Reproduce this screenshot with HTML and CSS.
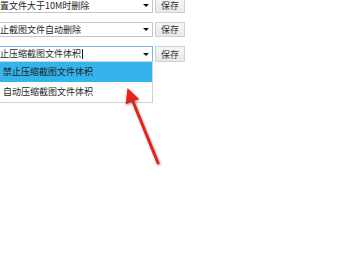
FILE: index.html
```html
<!DOCTYPE html>
<html lang="zh-CN">
<head>
    <meta charset="UTF-8">
    <title>截图设置</title>
    <link rel="stylesheet" href="styles.css">
</head>
<body>
    <div class="settings">
        <div class="row">
            <div class="select">
                <span class="value">置文件大于10M时删除</span>
                <span class="caret"></span>
            </div>
            <button class="save">保存</button>
        </div>
        <div class="row">
            <div class="select">
                <span class="value">止截图文件自动删除</span>
                <span class="caret"></span>
            </div>
            <button class="save">保存</button>
        </div>
        <div class="row">
            <div class="select focused">
                <span class="value">止压缩截图文件体积<i class="cursor"></i></span>
                <span class="caret"></span>
                <ul class="options">
                    <li class="active">禁止压缩截图文件体积</li>
                    <li>自动压缩截图文件体积</li>
                </ul>
            </div>
            <button class="save">保存</button>
        </div>
    </div>

    <svg class="pointer" width="341" height="255" viewBox="0 0 341 255">
        <line x1="158" y1="163" x2="131.5" y2="98" stroke="#e8221b" stroke-width="3" stroke-linecap="round"/>
        <polygon points="127.5,88 125.5,104.5 139,99" fill="#e8221b"/>
    </svg>
</body>
</html>
```

FILE: styles.css
```css
body {
    margin: 0;
    height: 255px;
    background: #fff;
    font-family: "Noto Sans CJK SC", "Noto Sans", sans-serif;
    font-size: 9px;
    color: #1e1e1e;
}
.settings { margin-top: -2px; }
.row {
    display: flex;
    align-items: stretch;
    height: 15px;
    margin-bottom: 9px;
}
.row:nth-child(3) { height: 16px; }
.select {
    position: relative;
    z-index: 1;
    box-sizing: border-box;
    width: 163px;
    margin-left: -10px;
    padding-left: 9px;
    border: 1px solid #c4c6cc;
    display: flex;
    align-items: center;
    justify-content: space-between;
}
.select.focused { border-color: #7eb4ea; }
.value { white-space: nowrap; line-height: 12px; display: flex; align-items: center; }
.cursor {
    display: inline-block;
    width: 1px;
    height: 10px;
    background: #222;
    margin-left: 1px;
}
.caret {
    width: 0;
    height: 0;
    margin-right: 3px;
    border-left: 3px solid transparent;
    border-right: 3px solid transparent;
    border-top: 3px solid #111;
}
.save {
    box-sizing: border-box;
    width: 30px;
    margin-left: 2px;
    padding: 0;
    font: inherit;
    color: #333;
    background: linear-gradient(#f6f6f6, #e9e9e9);
    border: 1px solid #d0d0d0;
}
.options {
    position: absolute;
    left: -1px;
    right: -1px;
    top: 100%;
    margin: 0;
    padding: 0;
    list-style: none;
    background: #fff;
    border: 1px solid #cfd2d6;
}
.options li {
    display: block;
    height: 20px;
    line-height: 20px;
    padding-left: 12px;
    white-space: nowrap;
}
.options li.active { background: #35b3ec; }
.pointer {
    position: absolute;
    z-index: 2;
    left: 0;
    top: 0;
    filter: drop-shadow(1px 1px 1px rgba(0, 0, 0, 0.35));
}
```
